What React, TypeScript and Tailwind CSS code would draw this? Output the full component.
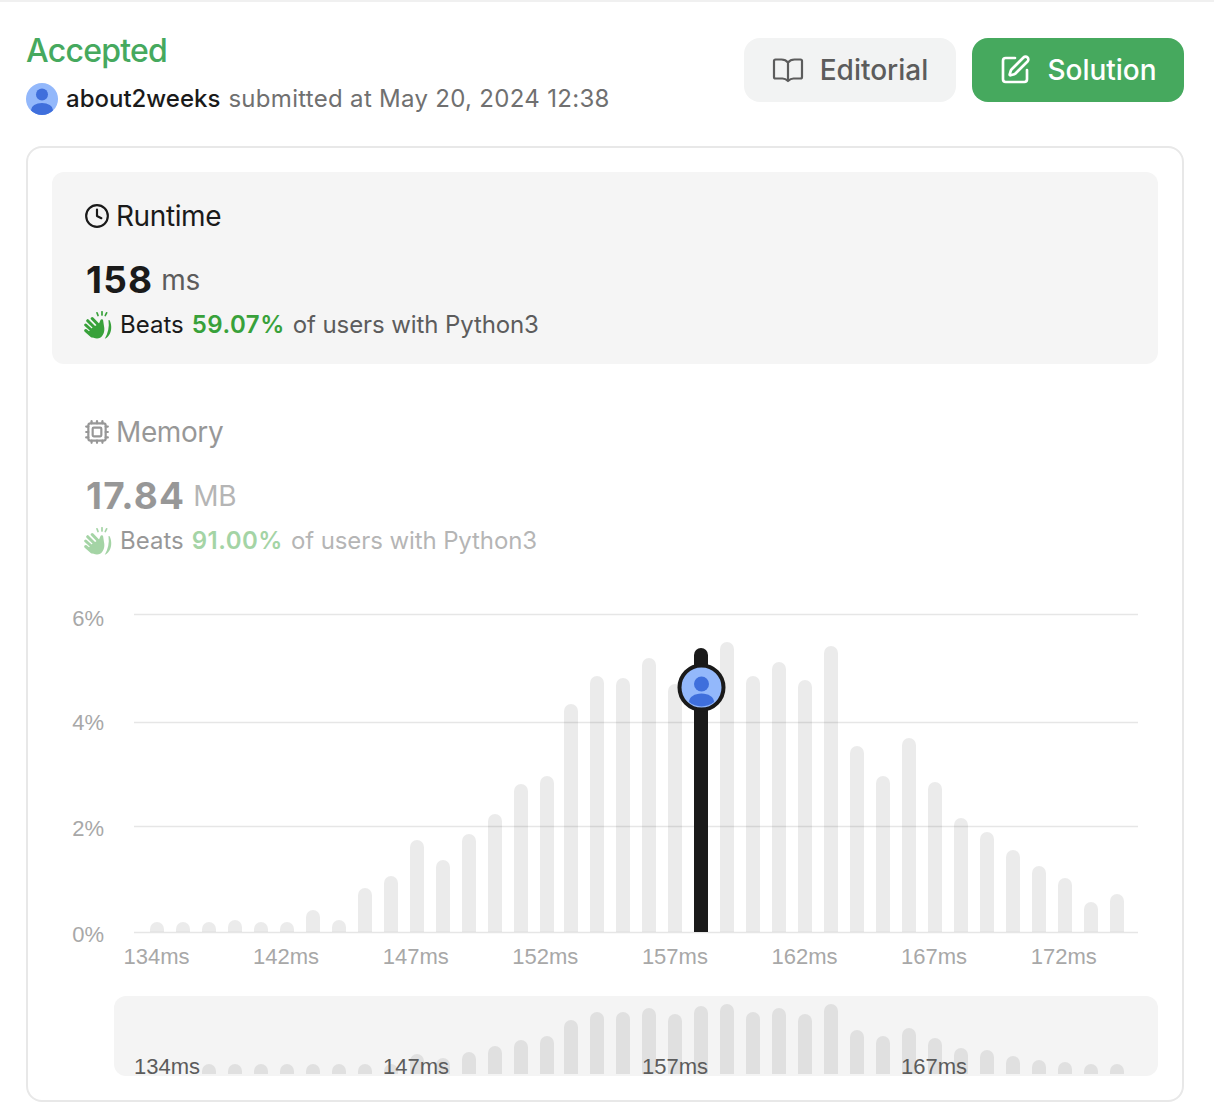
import { Clock, Cpu, SquarePen } from 'lucide-react';

const BAR_TOPS = [
  922, 922, 922, 920, 922, 922, 910, 920, 888, 876, 840, 860, 834, 814, 784, 776, 704, 676, 678,
  658, 684, 648, 642, 676, 662, 680, 646, 746, 776, 738, 782, 818, 832, 850, 866, 878, 902, 894,
];

const MINI_TOPS = [
  1064, 1064, 1064, 1064, 1064, 1064, 1064, 1064, 1064, 1064, 1054, 1058, 1052, 1046, 1040, 1036,
  1020, 1012, 1012, 1008, 1014, 1006, 1004, 1012, 1008, 1014, 1004, 1030, 1036, 1028, 1038, 1048,
  1050, 1056, 1060, 1062, 1064, 1064,
];

const AXIS_LABELS = ['134ms', '142ms', '147ms', '152ms', '157ms', '162ms', '167ms', '172ms'];
const MINI_LABELS = [
  { text: '134ms', x: 167 },
  { text: '147ms', x: 416 },
  { text: '157ms', x: 675 },
  { text: '167ms', x: 934 },
];
const GRID = [
  { label: '6%', line: 614.5, text: 626 },
  { label: '4%', line: 722.5, text: 730 },
  { label: '2%', line: 826.5, text: 836 },
  { label: '0%', line: 932.5, text: 942 },
];

const AXIS_FONT = '"Liberation Sans", Arial, sans-serif';

function barX(i: number) {
  return 150 + i * 26 - (i >= 16 ? 2 : 0);
}

function barPath(x: number, top: number, bottom: number) {
  return `M${x} ${bottom}V${top + 7}a7 7 0 0 1 14 0V${bottom}Z`;
}

function ClapIcon({ color }: { color: string }) {
  return (
    <svg viewBox="0 0 28 28" className="h-7 w-7 shrink-0" fill="none">
      <path
        d="M1.7 19.500L8 25M1.700 14L10 21.500M3.700 9.700L12 18M8.200 7.500L14 13.500"
        stroke={color}
        strokeWidth="3"
        strokeLinecap="round"
      />
      <path
        d="M8 17l7-4.500 1.500-3.500c.5-1.200 2.300-1 2.600.3l1.200 7.700c.5 5.500-2.500 10.500-7.300 10.500-2.500 0-4.700-1-6.500-2.500l-3-3z"
        fill={color}
      />
      <path d="M24.500 9.500c1 6.500-.5 12.500-3.700 18.300 4.700-2 6.700-7.500 6.400-12.300-.1-2.300-.7-4.500-1.500-6-.4-.6-1.200-.6-1.200 0z" fill={color} />
      <path d="M13 1.800l1 2.700M18 .8v3.200M22.600 1.800l-1.300 2.700" stroke={color} strokeWidth="1.700" strokeLinecap="round" />
    </svg>
  );
}

function EditorialBook() {
  return (
    <svg viewBox="0 0 32 26" className="h-[26px] w-8 shrink-0" fill="none" stroke="currentColor" strokeWidth="2.200" strokeLinejoin="round" strokeLinecap="round">
      <path d="M16 5.500C14.500 3.500 12 2.500 9.500 2.500H3.500A1.500 1.500 0 0 0 2 4v16a1.500 1.500 0 0 0 1.500 1.500h7c1.800 0 3.500.6 5.500 2.500 2-1.900 3.700-2.500 5.500-2.500h7A1.500 1.500 0 0 0 30 20V4a1.500 1.500 0 0 0-1.500-1.500h-6C20 2.500 17.500 3.500 16 5.500Zm0 0V23" />
    </svg>
  );
}

function Avatar() {
  return (
    <svg viewBox="0 0 32 32" className="h-8 w-8 shrink-0">
      <defs>
        <clipPath id="avatar-clip">
          <circle cx="16" cy="16" r="16" />
        </clipPath>
      </defs>
      <g clipPath="url(#avatar-clip)">
        <rect width="32" height="32" fill="#93b8fb" />
        <circle cx="16" cy="11.500" r="6" fill="#3f6fdc" />
        <ellipse cx="16" cy="27" rx="11" ry="7" fill="#3f6fdc" />
      </g>
    </svg>
  );
}

function StatPanel({
  icon,
  title,
  value,
  unit,
  percent,
  active,
}: {
  icon: React.ReactNode;
  title: string;
  value: string;
  unit: string;
  percent: string;
  active?: boolean;
}) {
  return (
    <div className={`h-[192px] rounded-xl px-8 pt-7 ${active ? 'bg-[#f5f5f5]' : 'opacity-45'}`}>
      <div className="flex h-8 items-center gap-[6px] text-[28px] leading-8 tracking-[-0.4px] text-[#1a1a1a]">
        {icon}
        <span>{title}</span>
      </div>
      <div className="mt-6 flex h-12 items-center gap-[8px] pl-0.5">
        <span className="text-[37px] leading-12 font-bold tracking-[1.2px] text-[#1a1a1a]">{value}</span>
        <span className="text-[28px] leading-12 tracking-[-0.3px] text-[#5c5c5c]">{unit}</span>
      </div>
      <div className="mt-[5px] flex h-8 items-center gap-2 text-[24px]">
        <ClapIcon color="#38a13a" />
        <span className="text-[#1a1a1a]">Beats</span>
        <span className="font-semibold tracking-[0.5px] text-[#38a13a]">{percent}</span>
        <span className="tracking-[-0.1px] text-[#5c5c5c]">of users with Python3</span>
      </div>
    </div>
  );
}

function MainChart() {
  return (
    <svg viewBox="52 604 1106 368" className="mt-6 block h-[368px] w-[1106px]" style={{ fontFamily: AXIS_FONT }}>
      {GRID.map((g) => (
        <g key={g.label}>
          <line x1="134" x2="1138" y1={g.line} y2={g.line} stroke="#e6e6e6" strokeWidth="1.5" />
          <text x="104" y={g.text} textAnchor="end" fontSize="22" fill="#a8a8a8">
            {g.label}
          </text>
        </g>
      ))}
      {BAR_TOPS.map((top, i) =>
        i === 21 ? null : <path key={i} d={barPath(barX(i), top, 932)} fill="rgba(0,0,0,0.08)" />,
      )}
      <path d={barPath(694, 648, 932)} fill="#1a1a1a" />
      <circle cx="701.5" cy="687.5" r="22" fill="#93b8fb" stroke="#1a1a1a" strokeWidth="4" />
      <circle cx="701.5" cy="684" r="7.5" fill="#3f6fdc" />
      <path d="M689 702c0-5 5.500-8.500 12.500-8.500s12.500 3.500 12.500 8.500a20 20 0 0 1-25 0Z" fill="#3f6fdc" />
      {AXIS_LABELS.map((label, i) => (
        <text key={label} x={156.5 + i * 129.6} y="964" textAnchor="middle" fontSize="22" fill="#a8a8a8">
          {label}
        </text>
      ))}
    </svg>
  );
}

function MiniChart() {
  return (
    <div className="mt-6 ml-[62px] h-20 w-[1044px] rounded-xl bg-[#f4f4f4]">
      <svg viewBox="114 996 1044 80" className="block h-20 w-[1044px] overflow-visible" style={{ fontFamily: AXIS_FONT }}>
        {MINI_TOPS.map((top, i) =>
          i < 2 ? null : <path key={i} d={barPath(barX(i), top, 1074)} fill="rgba(0,0,0,0.08)" />,
        )}
        {MINI_LABELS.map((l) => (
          <text key={l.text} x={l.x} y="1074" textAnchor="middle" fontSize="22" fill="#5c5c5c">
            {l.text}
          </text>
        ))}
      </svg>
    </div>
  );
}

export default function App() {
  return (
    <div
      className="h-[1102px] w-[1214px] overflow-hidden border-t-2 border-[#f0f0f0] bg-white"
      style={{ fontFamily: 'Inter, "Liberation Sans", sans-serif' }}
    >
      <div className="mx-[26px] mt-9 flex h-16 w-[1158px] items-start justify-between">
        <div className="-mt-[3px]">
          <div className="h-[32px] text-[32px] leading-[32px] font-medium tracking-[-0.75px] text-[#46a95e]">Accepted</div>
          <div className="mt-[16px] flex h-8 items-center gap-2 text-[24px]">
            <Avatar />
            <span className="font-medium text-[#1a1a1a]">about2weeks</span>
            <span className="tracking-[0.3px] text-[#707070]">submitted at May 20, 2024 12:38</span>
          </div>
        </div>
        <div className="flex gap-4">
          <button className="flex h-16 w-[212px] items-center justify-center gap-4 rounded-2xl bg-[#f2f3f3] text-[28px] font-medium text-[#5c5c5c]">
            <EditorialBook />
            Editorial
          </button>
          <button className="flex h-16 w-[212px] items-center justify-center gap-4 rounded-2xl bg-[#46a95e] text-[28px] font-medium text-white">
            <SquarePen className="h-8 w-8" strokeWidth={2} />
            Solution
          </button>
        </div>
      </div>

      <div className="mx-[26px] mt-[44px] h-[956px] w-[1158px] rounded-2xl border-2 border-[#e8e8e8] p-6">
        <StatPanel
          active
          icon={<Clock className="h-[26px] w-[26px]" strokeWidth={2} />}
          title="Runtime"
          value="158"
          unit="ms"
          percent="59.07%"
        />
        <div className="mt-6">
          <StatPanel
            icon={<Cpu className="h-[26px] w-[26px]" strokeWidth={2} />}
            title="Memory"
            value="17.84"
            unit="MB"
            percent="91.00%"
          />
        </div>
        <MainChart />
        <MiniChart />
      </div>
    </div>
  );
}
